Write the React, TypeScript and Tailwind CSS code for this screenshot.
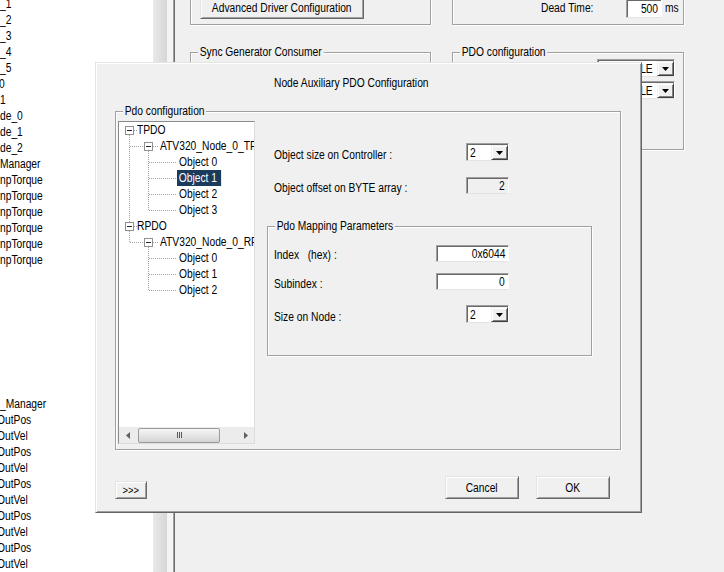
import React from "react";

type O = "l" | "r" | "c";

function T({ children, o = "l" }: { children: React.ReactNode; o?: O }) {
  const cls =
    o === "l"
      ? "inline-block whitespace-nowrap scale-x-[0.855] origin-left"
      : o === "r"
      ? "inline-block whitespace-nowrap scale-x-[0.855] origin-right"
      : "inline-block whitespace-nowrap scale-x-[0.855] origin-center";
  return <span className={cls}>{children}</span>;
}

const leftRows: { t: string; c: string }[] = [
  { t: "_1", c: "" },
  { t: "_2", c: "" },
  { t: "_3", c: "" },
  { t: "_4", c: "" },
  { t: "_5", c: "" },
  { t: "0", c: "-ml-[1px]" },
  { t: "1", c: "" },
  { t: "de_0", c: "" },
  { t: "de_1", c: "" },
  { t: "de_2", c: "" },
  { t: "Manager", c: "" },
  { t: "npTorque", c: "" },
  { t: "npTorque", c: "" },
  { t: "npTorque", c: "" },
  { t: "npTorque", c: "" },
  { t: "npTorque", c: "" },
  { t: "npTorque", c: "" },
  { t: "", c: "" },
  { t: "", c: "" },
  { t: "", c: "" },
  { t: "", c: "" },
  { t: "", c: "" },
  { t: "", c: "" },
  { t: "", c: "" },
  { t: "", c: "" },
  { t: "_Manager", c: "" },
  { t: "OutPos", c: "-ml-[3px]" },
  { t: "OutVel", c: "-ml-[3px]" },
  { t: "OutPos", c: "-ml-[3px]" },
  { t: "OutVel", c: "-ml-[3px]" },
  { t: "OutPos", c: "-ml-[3px]" },
  { t: "OutVel", c: "-ml-[3px]" },
  { t: "OutPos", c: "-ml-[3px]" },
  { t: "OutVel", c: "-ml-[3px]" },
  { t: "OutPos", c: "-ml-[3px]" },
  { t: "OutVel", c: "-ml-[3px]" },
];

function GroupBox({
  label,
  className,
  children,
}: {
  label?: string;
  className: string;
  children?: React.ReactNode;
}) {
  return (
    <div
      className={
        "relative shrink-0 border border-[#a0a0a0] shadow-[inset_1px_1px_0_#ffffff,1px_1px_0_#ffffff] " +
        className
      }
    >
      {label && (
        <span className="absolute -top-[9px] left-[7px] px-[2px] bg-[#f0f0f0] leading-[16px] whitespace-nowrap scale-x-[0.855] origin-left">
          {label}
        </span>
      )}
      {children}
    </div>
  );
}

function Btn({ className, children }: { className: string; children: React.ReactNode }) {
  return (
    <div
      className={
        "shrink-0 flex items-center justify-center bg-[#f0f0f0] border border-t-[#e3e3e3] border-l-[#e3e3e3] border-r-[#696969] border-b-[#696969] shadow-[inset_1px_1px_0_#ffffff,inset_-1px_-1px_0_#a0a0a0] leading-none whitespace-nowrap " +
        className
      }
    >
      <T o="c">{children}</T>
    </div>
  );
}

function Field({
  className,
  children,
  disabled,
}: {
  className: string;
  children: React.ReactNode;
  disabled?: boolean;
}) {
  return (
    <div
      className={
        "shrink-0 flex items-center justify-end pr-[3px] leading-none border border-t-[#a0a0a0] border-l-[#a0a0a0] border-r-[#ffffff] border-b-[#e3e3e3] shadow-[inset_1px_1px_0_#696969] " +
        (disabled ? "bg-[#f0f0f0] " : "bg-white ") +
        className
      }
    >
      <T o="r">{children}</T>
    </div>
  );
}

function DownArrow() {
  return (
    <svg width="7" height="4" viewBox="0 0 7 4">
      <polygon points="0,0 7,0 3.5,4" fill="#000" />
    </svg>
  );
}

function ArrowBtn() {
  return (
    <div className="w-[17px] h-full shrink-0 flex items-center justify-center bg-[#f0f0f0] border border-t-[#f0f0f0] border-l-[#f0f0f0] border-r-[#404040] border-b-[#404040] shadow-[inset_1px_1px_0_#ffffff,inset_-1px_-1px_0_#808080]">
      <DownArrow />
    </div>
  );
}

function Combo({
  value,
  className,
  right,
}: {
  value: string;
  className: string;
  right?: boolean;
}) {
  return (
    <div
      className={
        "shrink-0 flex bg-white border border-t-[#a0a0a0] border-l-[#a0a0a0] border-r-[#ffffff] border-b-[#e3e3e3] shadow-[inset_1px_1px_0_#696969] pt-[1px] pl-[1px] " +
        className
      }
    >
      {right ? (
        <div className="flex-1 flex items-center justify-end pr-[4px] leading-none overflow-hidden">
          <T o="r">{value}</T>
        </div>
      ) : (
        <div className="flex-1 flex items-center pl-[2px] leading-none">
          <T>{value}</T>
        </div>
      )}
      <ArrowBtn />
    </div>
  );
}

function ExpBox() {
  return (
    <div className="w-[9px] h-[9px] shrink-0 border border-[#919191] bg-white flex items-center justify-center">
      <div className="w-[5px] h-[1px] bg-[#2a2a2a]" />
    </div>
  );
}

function TreeRow({
  level,
  text,
  selected,
}: {
  level: 0 | 1 | 2;
  text: string;
  selected?: boolean;
}) {
  if (level === 0) {
    return (
      <div className="h-[16px] flex items-center pl-[6px] whitespace-nowrap">
        <ExpBox />
        <span className="ml-[3px] leading-[16px]">
          <T>{text}</T>
        </span>
      </div>
    );
  }
  if (level === 1) {
    return (
      <div className="h-[16px] flex items-center pl-[25px] whitespace-nowrap">
        <ExpBox />
        <span className="ml-[7px] leading-[16px]">
          <T>{text}</T>
        </span>
      </div>
    );
  }
  return (
    <div className="h-[16px] flex items-center pl-[58px] whitespace-nowrap">
      {selected ? (
        <span className="inline-block px-[2px] leading-[16px] bg-[#1b3b5d] text-white scale-x-[0.9] origin-left">
          <span className="inline-block scale-x-[0.95] origin-left">{text}</span>
        </span>
      ) : (
        <span className="px-[2px] leading-[16px]">
          <T>{text}</T>
        </span>
      )}
    </div>
  );
}

function TreeLines() {
  const s = { stroke: "#a0a0a0", strokeDasharray: "1 1", strokeWidth: 1 };
  const hz = [40.5, 56.5, 72.5, 88.5, 136.5, 152.5, 168.5];
  return (
    <svg
      className="absolute left-0 top-0 pointer-events-none"
      width="140"
      height="200"
      shapeRendering="crispEdges"
    >
      <line x1="10.5" y1="13" x2="10.5" y2="100" {...s} />
      <line x1="10.5" y1="109" x2="10.5" y2="121" {...s} />
      <line x1="15" y1="8.5" x2="18" y2="8.5" {...s} />
      <line x1="15" y1="104.5" x2="18" y2="104.5" {...s} />
      <line x1="11" y1="24.5" x2="25" y2="24.5" {...s} />
      <line x1="11" y1="120.5" x2="25" y2="120.5" {...s} />
      <line x1="29.5" y1="29" x2="29.5" y2="89" {...s} />
      <line x1="29.5" y1="125" x2="29.5" y2="169" {...s} />
      <line x1="34" y1="24.5" x2="40" y2="24.5" {...s} />
      <line x1="34" y1="120.5" x2="40" y2="120.5" {...s} />
      {hz.map((y) => (
        <line key={y} x1="30" y1={y} x2="57" y2={y} {...s} />
      ))}
    </svg>
  );
}

function HScroll() {
  return (
    <div className="h-[16px] shrink-0 flex items-center bg-[#ececec]">
      <div className="w-[17px] h-full flex items-center justify-center">
        <svg width="4" height="7" viewBox="0 0 4 7">
          <polygon points="4,0 4,7 0,3.5" fill="#606060" />
        </svg>
      </div>
      <div className="ml-[2px] w-[82px] h-[15px] rounded-[2px] border border-[#9a9a9a] bg-gradient-to-b from-[#f6f6f6] to-[#d4d4d4] flex items-center justify-center gap-[1px]">
        <div className="w-[1px] h-[6px] bg-[#5a5a5a]" />
        <div className="w-[1px] h-[6px] bg-[#5a5a5a]" />
        <div className="w-[1px] h-[6px] bg-[#5a5a5a]" />
      </div>
      <div className="flex-1" />
      <div className="w-[17px] h-full flex items-center justify-center">
        <svg width="4" height="7" viewBox="0 0 4 7">
          <polygon points="0,0 0,7 4,3.5" fill="#606060" />
        </svg>
      </div>
    </div>
  );
}

function Dialog() {
  return (
    <div className="absolute left-[95px] top-[62px] w-[547px] h-[451px] bg-[#f0f0f0] border border-t-[#e3e3e3] border-l-[#e3e3e3] border-r-[#646464] border-b-[#646464] shadow-[inset_1px_1px_0_#ffffff,inset_-1px_-1px_0_#a0a0a0] flex flex-col">
      <div className="mt-[12px] pl-[178px] leading-[16px]">
        <T>Node Auxiliary PDO Configuration</T>
      </div>
      <GroupBox label="Pdo configuration" className="mt-[20px] ml-[19px] w-[506px] h-[339px] flex">
        {/* tree */}
        <div className="ml-[2px] mt-[9px] w-[137px] h-[323px] shrink-0 flex flex-col bg-white border border-t-[#8a8a8a] border-l-[#8a8a8a] border-r-[#dcdcdc] border-b-[#dcdcdc]">
          <div className="relative flex-1 overflow-hidden">
            <TreeLines />
            <TreeRow level={0} text="TPDO" />
            <TreeRow level={1} text="ATV320_Node_0_TPDO" />
            <TreeRow level={2} text="Object 0" />
            <TreeRow level={2} text="Object 1" selected />
            <TreeRow level={2} text="Object 2" />
            <TreeRow level={2} text="Object 3" />
            <TreeRow level={0} text="RPDO" />
            <TreeRow level={1} text="ATV320_Node_0_RPDO" />
            <TreeRow level={2} text="Object 0" />
            <TreeRow level={2} text="Object 1" />
            <TreeRow level={2} text="Object 2" />
          </div>
          <HScroll />
        </div>
        {/* right side */}
        <div className="ml-[12px] flex flex-col">
          <div className="mt-[31px] h-[18px] flex items-center pl-[7px]">
            <span className="w-[192px] shrink-0 pt-[5px] leading-[16px]">
              <T>Object size on Controller :</T>
            </span>
            <Combo value="2" className="w-[43px] h-[18px]" />
          </div>
          <div className="mt-[16px] h-[17px] flex items-center pl-[7px]">
            <span className="w-[192px] shrink-0 pt-[4px] leading-[16px]">
              <T>Object offset on BYTE array :</T>
            </span>
            <Field className="w-[43px] h-[17px]" disabled>
              2
            </Field>
          </div>
          <GroupBox label="Pdo Mapping Parameters" className="mt-[32px] w-[325px] h-[130px] flex flex-col">
            <div className="mt-[18px] h-[17px] flex items-center pl-[6px]">
              <span className="w-[162px] shrink-0 pt-[3px] leading-[16px]">
                <T>Index &nbsp;&nbsp;(hex) :</T>
              </span>
              <Field className="w-[73px] h-[17px]">0x6044</Field>
            </div>
            <div className="mt-[11px] h-[17px] flex items-center pl-[6px]">
              <span className="w-[162px] shrink-0 pt-[4px] leading-[16px]">
                <T>Subindex :</T>
              </span>
              <Field className="w-[73px] h-[17px]">0</Field>
            </div>
            <div className="mt-[15px] h-[18px] flex items-center pl-[6px]">
              <span className="w-[192px] shrink-0 pt-[5px] leading-[16px]">
                <T>Size on Node :</T>
              </span>
              <Combo value="2" className="w-[43px] h-[18px]" />
            </div>
          </GroupBox>
        </div>
      </GroupBox>
      <div className="flex items-end mt-[26px] pl-[19px] pr-[31px]">
        <Btn className="w-[32px] h-[18px] text-[11px]">&gt;&gt;&gt;</Btn>
        <Btn className="ml-auto w-[74px] h-[23px]">Cancel</Btn>
        <Btn className="ml-[17px] w-[74px] h-[23px]">OK</Btn>
      </div>
    </div>
  );
}

export default function App() {
  return (
    <div className="relative w-[724px] h-[572px] overflow-hidden bg-[#f0f0f0] text-black text-[12px] font-['Liberation_Sans','Arial',sans-serif]">
      <div className="flex h-full">
        {/* left list */}
        <div className="w-[153px] shrink-0 h-full bg-white overflow-hidden">
          <div className="-mt-[4px]">
            {leftRows.map((r, i) => (
              <div key={i} className="h-[16px] leading-[16px] whitespace-nowrap">
                <span className={"inline-block " + r.c}>
                  <T>{r.t}</T>
                </span>
              </div>
            ))}
          </div>
        </div>
        {/* splitter strip */}
        <div className="w-[14px] shrink-0 h-full bg-gradient-to-r from-[#e9e9e9] to-[#d6d6d6]" />
        <div className="w-[6px] shrink-0 h-full bg-[#f4f4f4]" />
        <div className="w-[1px] shrink-0 h-full bg-[#a0a0a0]" />
        <div className="w-[1px] shrink-0 h-full bg-[#6d6d6d]" />
        {/* main panel */}
        <div className="flex-1 flex flex-col">
          <div className="flex -mt-[20px] h-[45px] shrink-0">
            <GroupBox className="ml-[15px] w-[241px] h-full flex items-end pb-[5px] pl-[9px]">
              <Btn className="w-[164px] h-[22px]">Advanced Driver Configuration</Btn>
            </GroupBox>
            <GroupBox className="ml-[21px] w-[232px] h-full flex items-end pb-[6px]">
              <span className="ml-[88px] w-[85px] shrink-0 leading-[19px]">
                <T>Dead Time:</T>
              </span>
              <Field className="w-[36px] h-[19px]">500</Field>
              <span className="ml-[3px] leading-[19px]">
                <T>ms</T>
              </span>
            </GroupBox>
          </div>
          <div className="flex mt-[27px] shrink-0">
            <GroupBox label="Sync Generator Consumer" className="ml-[15px] w-[241px] h-[100px]" />
            <GroupBox label="PDO configuration" className="ml-[21px] w-[232px] h-[98px] flex flex-col pl-[144px] pt-[6px]">
              <Combo value="DISABLE" right className="w-[78px] h-[18px]" />
              <Combo value="DISABLE" right className="mt-[4px] w-[78px] h-[18px]" />
            </GroupBox>
          </div>
        </div>
      </div>
      <Dialog />
    </div>
  );
}
